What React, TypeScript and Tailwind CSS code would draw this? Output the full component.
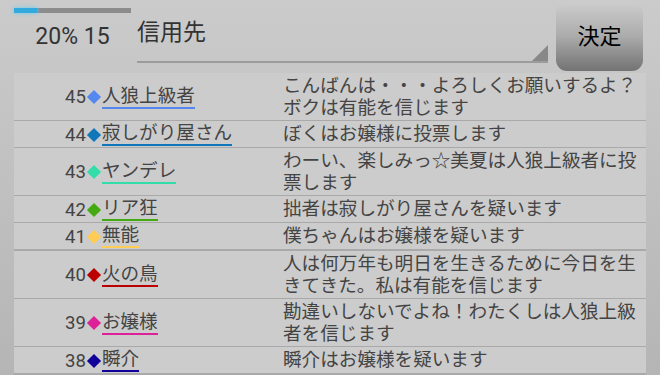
const rows = [
  { no: 45, name: "人狼上級者", color: "#5588ee", lines: ["こんばんは・・・よろしくお願いするよ？", "ボクは有能を信じます"] },
  { no: 44, name: "寂しがり屋さん", color: "#1177bb", lines: ["ぼくはお嬢様に投票します"] },
  { no: 43, name: "ヤンデレ", color: "#33ddaa", lines: ["わーい、楽しみっ☆美夏は人狼上級者に投", "票します"] },
  { no: 42, name: "リア狂", color: "#44aa11", lines: ["拙者は寂しがり屋さんを疑います"] },
  { no: 41, name: "無能", color: "#ffcc55", lines: ["僕ちゃんはお嬢様を疑います"], thick: true },
  { no: 40, name: "火の鳥", color: "#bb0000", lines: ["人は何万年も明日を生きるために今日を生", "きてきた。私は有能を信じます"] },
  { no: 39, name: "お嬢様", color: "#dd2299", lines: ["勘違いしないでよね！わたくしは人狼上級", "者を信じます"] },
  { no: 38, name: "瞬介", color: "#110099", lines: ["瞬介はお嬢様を疑います"], thick: true },
];

const font = { fontFamily: "Roboto, 'Noto Sans CJK JP', sans-serif" };

export default function App() {
  return (
    <div
      className="h-[375px] w-[660px] overflow-hidden bg-gradient-to-b from-[#cbcbcb] to-[#b5b5b5] text-[#444]"
      style={font}
    >
      {/* header */}
      <div className="flex h-[73px] pl-[14px]">
        <div className="flex w-[117px] flex-col">
          <div className="mt-[8px] flex h-[5px] bg-[#8c8c8c]">
            <div className="w-[23px] bg-[#33aadd] shadow-[0_0_4px_#66ccee]" />
          </div>
          <div className="mt-[10px] text-center text-[23px] leading-[27px] text-[#333]">20% 15</div>
        </div>
        <div className="relative ml-[6px] h-[63px] w-[411px] border-b-2 border-[#9c9c9c]">
          <div className="pt-[19px] text-[23px] leading-[27px] text-[#333]">信用先</div>
          <svg className="absolute right-0 bottom-0" width="16" height="16" viewBox="0 0 16 16">
            <polygon points="16,0 16,16 0,16" fill="#888" />
          </svg>
        </div>
        <button
          type="button"
          className="mt-[2px] ml-[8px] flex h-[69px] w-[87px] items-center justify-center rounded-[11px] bg-gradient-to-b from-[#cdcdcd] via-[#ababab] to-[#737373] text-[22px] text-black"
        >
          決定
        </button>
      </div>

      {/* log list */}
      <div className="ml-[14px] w-[632px] bg-[#cccccc]">
        {rows.map((r) => (
          <div
            key={r.no}
            className={`flex ${r.thick ? "border-b-2" : "border-b"} border-[#a9a9a9] pt-[2px] pb-[1px] text-[18.6px] leading-[22px]`}
          >
            <div className="flex w-[269px] items-center pl-[51px]">
              <span>{r.no}</span>
              <span className="mx-[3px] h-[10px] w-[10px] rotate-45" style={{ backgroundColor: r.color }} />
              <span className="border-b-2 leading-[21px]" style={{ borderColor: r.color }}>
                {r.name}
              </span>
            </div>
            <div className="flex-1 whitespace-nowrap">
              {r.lines.map((l, i) => (
                <div key={i}>{l}</div>
              ))}
            </div>
          </div>
        ))}
      </div>
    </div>
  );
}
